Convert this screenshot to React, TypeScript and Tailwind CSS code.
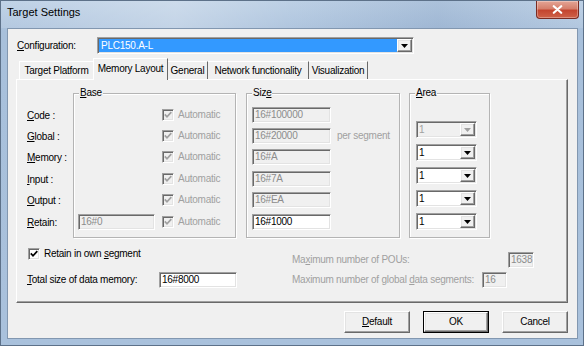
import React from "react";

const font = "font-['Liberation_Sans',Arial,sans-serif]";
const sunken =
  "border border-t-[#a0a0a0] border-l-[#a0a0a0] border-b-white border-r-white shadow-[inset_1px_1px_0_#696969,inset_-1px_-1px_0_#e3e3e3]";
const raised =
  "border border-t-white border-l-white border-b-[#696969] border-r-[#696969] shadow-[inset_-1px_-1px_0_#a0a0a0,inset_1px_1px_0_#e3e3e3]";
const grayText = "text-[#a0a0a0]";

function U({ children }: { children: React.ReactNode }) {
  return <span className="underline underline-offset-[1px] decoration-[1px]">{children}</span>;
}

function Edit({
  className = "",
  value,
  disabled = false,
}: {
  className?: string;
  value: string;
  disabled?: boolean;
}) {
  return (
    <div
      className={`${sunken} h-[16px] flex items-center pl-[2px] shrink-0 ${
        disabled ? "bg-[#f0f0f0] text-[#8c8c8c]" : "bg-white text-black"
      } ${className}`}
    >
      {value}
    </div>
  );
}

function Arrow({ disabled = false }: { disabled?: boolean }) {
  return (
    <svg width="7" height="4" viewBox="0 0 7 4">
      <polygon points="0,0 7,0 3.5,4" fill={disabled ? "#a0a0a0" : "#000"} />
    </svg>
  );
}

function Combo({ disabled = false }: { disabled?: boolean }) {
  return (
    <div
      className={`${sunken} w-[61px] h-[17px] flex items-stretch p-[1px] ${
        disabled ? "bg-[#f0f0f0]" : "bg-white"
      }`}
    >
      <div className={`flex-1 flex items-center pl-[1px] ${disabled ? grayText : "text-black"}`}>1</div>
      <div className={`${raised} w-[15px] bg-[#f0f0f0] flex items-center justify-center`}>
        <Arrow disabled={disabled} />
      </div>
    </div>
  );
}

function Check({ disabled = false }: { disabled?: boolean }) {
  return (
    <div
      className={`${sunken} w-[12px] h-[12px] ${
        disabled ? "bg-[#f0f0f0]" : "bg-white"
      } flex items-center justify-center shrink-0`}
    >
      <svg width="8" height="8" viewBox="0 0 8 8">
        <path
          d="M0.8 3.4 L3 5.8 L7.3 1.2"
          stroke={disabled ? "#a0a0a0" : "#000"}
          strokeWidth="1.7"
          fill="none"
        />
      </svg>
    </div>
  );
}

function Group({
  title,
  className = "",
  children,
}: {
  title: React.ReactNode;
  className?: string;
  children?: React.ReactNode;
}) {
  return (
    <div
      className={`relative shrink-0 border border-[#b4b4b4] shadow-[inset_1px_1px_0_#fff,1px_1px_0_#fff] ${className}`}
    >
      <div className="absolute -top-[6px] left-[5px] bg-[#f0f0f0] px-[1px] leading-none">{title}</div>
      {children}
    </div>
  );
}

function AutoCheck() {
  return (
    <div className="flex items-center">
      <Check disabled />
      <span className={`ml-[4px] ${grayText}`}>Automatic</span>
    </div>
  );
}

function Button({ children, isDefault = false }: { children: React.ReactNode; isDefault?: boolean }) {
  if (isDefault) {
    return (
      <div className="w-[66px] h-[22px] border border-black flex">
        <div className={`${raised} flex-1 bg-[#f0f0f0] flex items-center justify-center`}>{children}</div>
      </div>
    );
  }
  return (
    <div className={`${raised} w-[66px] h-[22px] bg-[#f0f0f0] flex items-center justify-center`}>
      {children}
    </div>
  );
}

const rowMt = ["", "mt-[5px]", "mt-[5px]", "mt-[6px]", "mt-[5px]", "mt-[6px]"];

export default function App() {
  const labels: React.ReactNode[] = [
    <>
      <U>C</U>ode :
    </>,
    <>
      <U>G</U>lobal :
    </>,
    <>
      <U>M</U>emory :
    </>,
    <>
      <U>I</U>nput :
    </>,
    <>
      <U>O</U>utput :
    </>,
    <>
      <U>R</U>etain:
    </>,
  ];
  const sizes = ["16#100000", "16#20000", "16#A", "16#7A", "16#EA"];

  return (
    <div
      className={`${font} w-[584px] h-[346px] overflow-hidden flex flex-col border border-[#5d7189] bg-[linear-gradient(180deg,#b7cce3_0px,#a8c0db_30px,#a9c1dc_100%)] text-[10px] tracking-[-0.25px] leading-none text-black`}
    >
      {/* Title bar */}
      <div className="h-[27px] shrink-0 flex items-start bg-[linear-gradient(90deg,rgba(255,255,255,0.12)_0%,rgba(255,255,255,0.3)_30%,rgba(255,255,255,0.08)_50%,rgba(40,70,120,0.08)_75%,rgba(255,255,255,0.1)_100%)]">
        <div className="pl-[6px] pt-[6px] text-[11px] tracking-normal text-black">Target Settings</div>
        <div className="ml-auto mr-[4px] w-[43px] h-[18px] rounded-b-[4px] border border-t-0 border-[#7a2b22] bg-[linear-gradient(180deg,#e4a596_0%,#d57f6c_45%,#c3452f_55%,#cf6249_100%)] shadow-[inset_0_0_0_1px_rgba(255,255,255,0.3)] flex items-center justify-center">
          <svg width="11" height="9" viewBox="0 0 11 9">
            <path
              d="M1.8 1.2 L9.2 7.8 M9.2 1.2 L1.8 7.8"
              stroke="#fff"
              strokeWidth="2.2"
              strokeLinecap="round"
            />
          </svg>
        </div>
      </div>

      {/* Client area */}
      <div className="ml-[6px] w-[571px] h-[311px] shrink-0 border border-[#8297b0] bg-[#f0f0f0] flex flex-col">
        {/* Configuration row */}
        <div className="mt-[8px] pl-[9px] flex items-center">
          <div className="w-[80px]">
            <U>C</U>onfiguration:
          </div>
          <div className={`${sunken} w-[317px] h-[17px] bg-white flex items-stretch p-[1px]`}>
            <div className="flex-1 bg-[#3399ff] text-white flex items-center pl-[2px]">PLC150.A-L</div>
            <div className={`${raised} w-[15px] bg-[#f0f0f0] flex items-center justify-center`}>
              <Arrow />
            </div>
          </div>
        </div>

        {/* Tabs */}
        <div className="mt-[4px] ml-[11px] h-[21px] flex items-end relative z-10">
          <div className="w-[74px] h-[18px] border-t border-l border-white flex items-center justify-center">
            Target Platform
          </div>
          <div className="w-[75px] h-[22px] -mb-[1px] pb-[1px] bg-[#f0f0f0] border-t border-l border-t-white border-l-white border-r border-r-[#696969] flex items-center justify-center">
            Memory Layout
          </div>
          <div className="w-[40px] h-[18px] border-t border-t-white border-r border-r-[#696969] flex items-center justify-center">
            General
          </div>
          <div className="w-[101px] h-[18px] border-t border-t-white border-r border-r-[#696969] flex items-center justify-center">
            Network functionality
          </div>
          <div className="w-[59px] h-[18px] border-t border-t-white border-r border-r-[#696969] flex items-center justify-center">
            Visualization
          </div>
        </div>

        {/* Tab panel */}
        <div className="ml-[8px] w-[552px] h-[224px] shrink-0 border border-t-white border-l-white border-r-[#696969] border-b-[#696969] shadow-[inset_-1px_-1px_0_#a0a0a0] flex flex-col">
          <div className="flex pl-[10px]">
            {/* row labels */}
            <div className="w-[46px] mt-[28px] flex flex-col shrink-0">
              {labels.map((l, i) => (
                <div key={i} className={`h-[16px] flex items-center ${rowMt[i]}`}>
                  {l}
                </div>
              ))}
            </div>

            {/* Base */}
            <Group title={<><U>B</U>ase</>} className="w-[163px] h-[145px] mt-[13px]">
              <div className="pt-[13px] flex flex-col">
                {[0, 1, 2, 3, 4].map((i) => (
                  <div key={i} className={`h-[16px] flex items-center pl-[88px] ${rowMt[i]}`}>
                    <AutoCheck />
                  </div>
                ))}
                <div className={`h-[16px] flex items-center pl-[4px] ${rowMt[5]}`}>
                  <Edit value="16#0" disabled className="w-[77px]" />
                  <div className="ml-[7px]">
                    <AutoCheck />
                  </div>
                </div>
              </div>
            </Group>

            {/* Size */}
            <Group title={<>Siz<U>e</U></>} className="w-[154px] h-[145px] mt-[13px] ml-[10px]">
              <div className="pt-[13px] pl-[5px] flex flex-col">
                {sizes.map((s, i) => (
                  <div key={i} className={`h-[16px] flex items-center ${rowMt[i]}`}>
                    <Edit value={s} disabled className="w-[79px]" />
                    {i === 1 && <span className={`ml-[6px] ${grayText}`}>per segment</span>}
                  </div>
                ))}
                <div className={`h-[16px] flex items-center ${rowMt[5]}`}>
                  <Edit value="16#1000" className="w-[79px]" />
                </div>
              </div>
            </Group>

            {/* Area */}
            <Group title={<><U>A</U>rea</>} className="w-[81px] h-[145px] mt-[13px] ml-[9px]">
              <div className="pt-[27px] pl-[6px] flex flex-col gap-[6px]">
                <Combo disabled />
                <Combo />
                <Combo />
                <Combo />
                <Combo />
              </div>
            </Group>
          </div>

          {/* bottom part */}
          <div className="flex pl-[10px]">
            <div className="w-[265px] shrink-0 flex flex-col">
              <div className="mt-[10px] h-[12px] pl-[1px] flex items-center">
                <Check />
                <span className="ml-[4px]">
                  Retain in own <U>s</U>egment
                </span>
              </div>
              <div className="mt-[12px] h-[16px] flex items-center">
                <span className="w-[132px] shrink-0">
                  <U>T</U>otal size of data memory:
                </span>
                <Edit value="16#8000" className="w-[78px]" />
              </div>
            </div>
            <div className="flex flex-col">
              <div className="mt-[14px] h-[16px] flex items-center">
                <span className={`w-[216px] shrink-0 ${grayText}`}>
                  Ma<U>x</U>imum number of POUs:
                </span>
                <Edit value="1638" disabled className="w-[26px]" />
              </div>
              <div className="mt-[4px] h-[16px] flex items-center">
                <span className={`w-[190px] shrink-0 ${grayText}`}>
                  Maximum number of global <U>d</U>ata segments:
                </span>
                <Edit value="16" disabled className="w-[25px]" />
              </div>
            </div>
          </div>
        </div>

        {/* Buttons */}
        <div className="mt-[8px] mr-[9px] flex justify-end gap-[13px]">
          <Button>
            <U>D</U>efault
          </Button>
          <Button isDefault>OK</Button>
          <Button>Cancel</Button>
        </div>
      </div>
    </div>
  );
}
